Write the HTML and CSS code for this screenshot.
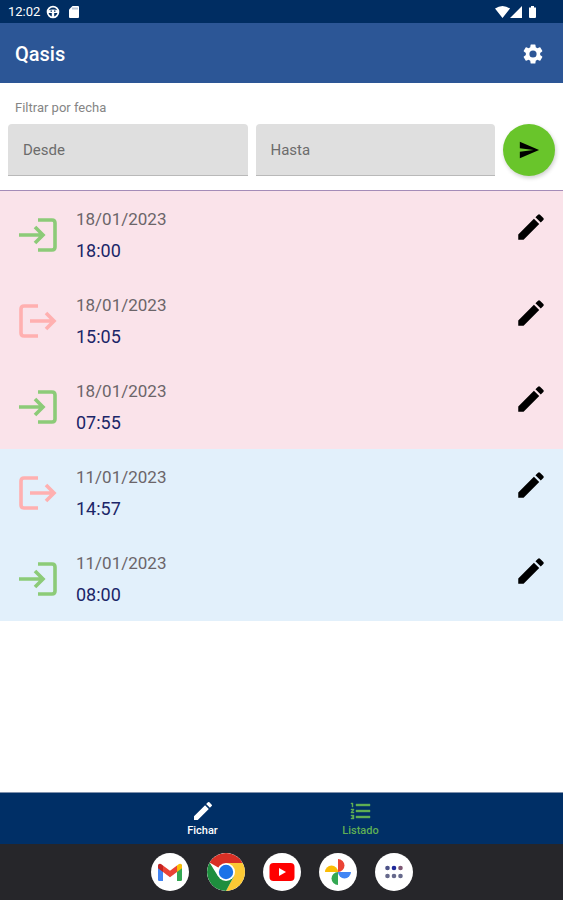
FILE: index.html
```html
<!DOCTYPE html>
<html lang="es">
<head>
<meta charset="utf-8">
<meta name="viewport" content="width=device-width, initial-scale=1">
<title>Qasis</title>
<link rel="stylesheet" href="styles.css">
</head>
<body>
<svg class="symbols" aria-hidden="true">
  <symbol id="enter" viewBox="0 0 40 36">
    <path d="M20 3H34Q37 3 37 6V30Q37 33 34 33H20M1 18H25M17 10L25 18L17 26" fill="none" stroke="currentColor" stroke-width="3.600"/>
  </symbol>
  <symbol id="leave" viewBox="0 0 40 36">
    <path d="M20 3H6Q3 3 3 6V30Q3 33 6 33H20M12 18H36M28 10L36 18L28 26" fill="none" stroke="currentColor" stroke-width="3.600"/>
  </symbol>
  <symbol id="pencil" viewBox="0 0 24 24">
    <path d="M3 17.250V21h3.750L17.810 9.940l-3.750-3.750L3 17.250zM20.710 7.040a1 1 0 0 0 0-1.410l-2.340-2.340a1 1 0 0 0-1.410 0l-1.830 1.830 3.750 3.750 1.830-1.830z" fill="currentColor"/>
  </symbol>
</svg>

<div class="status">
  <time>12:02</time>
  <svg class="status-face" viewBox="0 0 14 14"><circle cx="7" cy="7" r="5.400" fill="none" stroke="#fff" stroke-width="1.800"/><path d="M2 5.500Q7 3.500 12 5.500V8H2zM5.800 8h2.400v4.500H5.800z" fill="#fff"/><path d="M4.500 6.200h1.500M8 6.200h1.500" stroke="#002d62" stroke-width="1.200"/></svg>
  <svg class="status-card" viewBox="0 0 12 14"><path d="M4.500 1H10a1 1 0 0 1 1 1v10a1 1 0 0 1-1 1H2a1 1 0 0 1-1-1V4.500z" fill="#fff"/><path d="M5 2.500v2M7 2.500v2M9 2.500v2" stroke="#5b759b" stroke-width=".8"/></svg>
  <svg class="status-signal" viewBox="0 0 44 14"><path d="M0 3.500Q7.500-1.500 15 3.500L7.500 13zM27 1v12H15zM34 2.500h2V1h3v1.500h2V12a1 1 0 0 1-1 1h-5a1 1 0 0 1-1-1z" fill="#fff"/></svg>
</div>

<header class="appbar">
  <h1>Qasis</h1>
  <button class="settings" type="button" aria-label="Ajustes">
    <svg viewBox="0 0 24 24"><path fill="currentColor" d="M19.140 12.940c.04-.3.060-.61.060-.94s-.020-.64-.070-.94l2.030-1.580a.49.49 0 0 0 .12-.61l-1.920-3.320a.49.49 0 0 0-.59-.22l-2.390.96a7 7 0 0 0-1.620-.94l-.36-2.540A.48.48 0 0 0 13.920 2.400h-3.840a.48.48 0 0 0-.47.410l-.36 2.540a7.300 7.300 0 0 0-1.620.94l-2.390-.96a.48.48 0 0 0-.59.220L2.740 8.870a.48.48 0 0 0 .12.610l2.030 1.580c-.05.3-.09.630-.09.940s.020.640.070.940l-2.030 1.580a.49.49 0 0 0-.12.610l1.920 3.320c.12.220.370.290.590.220l2.390-.96c.5.380 1.030.700 1.620.940l.36 2.540c.05.240.240.410.480.410h3.840c.24 0 .44-.17.470-.41l.36-2.540a7 7 0 0 0 1.620-.94l2.390.96c.22.080.470 0 .590-.22l1.920-3.320a.48.48 0 0 0-.12-.61zM12 15.600a3.600 3.600 0 1 1 0-7.200 3.600 3.600 0 0 1 0 7.200z"/></svg>
  </button>
</header>

<form class="filter">
  <p>Filtrar por fecha</p>
  <div class="fields">
    <input type="text" name="desde" placeholder="Desde" aria-label="Desde">
    <input type="text" name="hasta" placeholder="Hasta" aria-label="Hasta">
    <button class="send" type="button" aria-label="Filtrar"><svg viewBox="0 0 24 24"><path d="M2 21L23 12 2 3v7l15 2-15 2z"/></svg></button>
  </div>
</form>

<main>
  <ul class="records">
    <li class="pink"><svg class="move in"><use href="#enter"/></svg><div class="when"><span class="date">18/01/2023</span><span class="hour">18:00</span></div><button type="button" aria-label="Editar"><svg><use href="#pencil"/></svg></button></li>
    <li class="pink"><svg class="move out"><use href="#leave"/></svg><div class="when"><span class="date">18/01/2023</span><span class="hour">15:05</span></div><button type="button" aria-label="Editar"><svg><use href="#pencil"/></svg></button></li>
    <li class="pink"><svg class="move in"><use href="#enter"/></svg><div class="when"><span class="date">18/01/2023</span><span class="hour">07:55</span></div><button type="button" aria-label="Editar"><svg><use href="#pencil"/></svg></button></li>
    <li class="blue"><svg class="move out"><use href="#leave"/></svg><div class="when"><span class="date">11/01/2023</span><span class="hour">14:57</span></div><button type="button" aria-label="Editar"><svg><use href="#pencil"/></svg></button></li>
    <li class="blue"><svg class="move in"><use href="#enter"/></svg><div class="when"><span class="date">11/01/2023</span><span class="hour">08:00</span></div><button type="button" aria-label="Editar"><svg><use href="#pencil"/></svg></button></li>
  </ul>
</main>

<nav class="tabs">
  <a href="#fichar"><svg><use href="#pencil"/></svg>Fichar</a>
  <a class="active" href="#listado" aria-current="page"><svg viewBox="0 0 24 24"><path fill="currentColor" d="M2 17h2v.5H3v1h1v.5H2v1h3v-4H2zm1-9h1V4H2v1h1zm-1 3h1.800L2 13.100v.9h3v-1H3.200L5 10.900V10H2zm5-6v2h14V5zm0 14h14v-2H7zm0-6h14v-2H7z" stroke="currentColor" stroke-width=".4"/></svg>Listado</a>
</nav>

<footer class="dock">
  <a href="#gmail" aria-label="Gmail"><svg viewBox="0 0 38 38"><path d="M7 11.500v15.200q0 1.300 1.300 1.300H12V15z" fill="#4285f4"/><path d="M26 15v13h3.700q1.300 0 1.300-1.300V11.500z" fill="#34a853"/><path d="M26 12.500V19l5-3.800V13q0-3-3-2z" fill="#fbbc04"/><path d="M12 12.500V19l-5-3.800V13q0-3 3-2z" fill="#c5221f"/><path d="M12 19v-6.500l7 5.200 7-5.200V19l-7 5.200z" fill="#ea4335"/></svg></a>
  <a href="#chrome" aria-label="Chrome"><svg viewBox="0 0 38 38"><path d="M19 19L2.550 9.500A19 19 0 0 1 35.450 9.500z" fill="#d93025"/><path d="M19 10H35.800A19 19 0 0 1 19 38L26.800 23.500z" fill="#fcc934"/><path d="M11.200 23.500L2.550 9.500A19 19 0 0 0 19 38L26.800 23.500z" fill="#1e8e3e"/><circle cx="19" cy="19" r="9" fill="#fff"/><circle cx="19" cy="19" r="7.200" fill="#1a73e8"/></svg></a>
  <a href="#youtube" aria-label="YouTube"><svg viewBox="0 0 38 38"><rect x="6.500" y="10" width="25" height="18" rx="4" fill="#f00"/><path d="M16 15v8l7-4z" fill="#fff"/></svg></a>
  <a href="#fotos" aria-label="Fotos"><svg viewBox="0 0 38 38"><path d="M19 6a6.500 6.500 0 0 1 0 13z" fill="#ea4335"/><path d="M6 19a6.500 6.500 0 0 1 13 0z" fill="#fbbc04"/><path d="M19 32a6.500 6.500 0 0 1 0-13z" fill="#34a853"/><path d="M32 19a6.500 6.500 0 0 1-13 0z" fill="#4285f4"/></svg></a>
  <a href="#apps" aria-label="Aplicaciones"><svg viewBox="0 0 38 38"><g fill="#66698c"><circle cx="12.500" cy="15" r="2.300" fill="#4d5288"/><circle cx="19" cy="15" r="2.300" fill="#20299a"/><circle cx="25.500" cy="15" r="2.300" fill="#7e5874"/><circle cx="12.500" cy="23" r="2.300"/><circle cx="19" cy="23" r="2.300"/><circle cx="25.500" cy="23" r="2.300"/></g></svg></a>
</footer>
</body>
</html>
```
FILE: styles.css
```css
* { box-sizing: border-box; }

body {
  margin: 0;
  min-height: 100vh;
  display: flex;
  flex-direction: column;
  background: #fff;
  font-family: Roboto, "Liberation Sans", sans-serif;
}

button {
  padding: 0;
  border: 0;
  background: none;
  color: inherit;
}

svg { display: block; }

.symbols {
  position: absolute;
  width: 0;
  height: 0;
}

.status {
  display: flex;
  align-items: center;
  height: 23px;
  padding: 0 24px 0 8px;
  background: #002d62;
  color: #fff;
  font-size: 13px;
}

.status-face {
  width: 14px;
  height: 14px;
  margin-left: 6px;
}

.status-card {
  width: 12px;
  height: 14px;
  margin-left: 8px;
}

.status-signal {
  width: 44px;
  height: 14px;
  margin-left: auto;
}

.appbar {
  display: flex;
  align-items: center;
  justify-content: space-between;
  height: 60px;
  padding: 2px 18px 0 15px;
  background: #2c5696;
  color: #fff;
}

.appbar h1 {
  margin: 0;
  font-size: 20px;
  font-weight: 500;
  line-height: 24px;
}

.settings svg {
  width: 24px;
  height: 24px;
}

.filter {
  padding: 17px 8px 14px;
  border-bottom: 1px solid #a48cb8;
}

.filter p {
  margin: 0 7px 8px;
  color: #858585;
  font-size: 13px;
  line-height: 16px;
}

.fields {
  display: flex;
  gap: 8px;
}

.fields input {
  flex: 1;
  min-width: 0;
  height: 52px;
  padding: 0 15px;
  border: 0;
  border-bottom: 1px solid #b9b9b9;
  border-radius: 4px 4px 0 0;
  background: #dfdfdf;
  color: #333;
  font: 15px/20px Roboto, "Liberation Sans", sans-serif;
}

.fields input::placeholder {
  color: #6c6c6c;
  opacity: 1;
}

.send {
  display: grid;
  place-items: center;
  width: 52px;
  height: 52px;
  border-radius: 50%;
  background: #69c52b;
  box-shadow: 1px 2px 4px #0003;
}

.send svg {
  width: 22px;
  height: 22px;
}

main { flex: 1; }

.records {
  margin: 0;
  padding: 0;
  list-style: none;
}

.records li {
  display: flex;
  height: 86px;
  padding: 18px 15px 0 18px;
}

.pink { background: #fae3ea; }
.blue { background: #e2f0fb; }

.move {
  width: 40px;
  height: 36px;
  margin-top: 8px;
}

.in { color: #8ccb78; }
.out { color: #ffb0b0; }

.when {
  display: flex;
  flex: 1;
  flex-direction: column;
  gap: 10px;
  margin-left: 18px;
}

.date {
  color: #6b6569;
  font-size: 17px;
  line-height: 20px;
}

.hour {
  color: #1b2668;
  font-size: 18px;
  line-height: 24px;
}

.records button {
  align-self: flex-start;
  margin-top: 1px;
  color: #000;
}

.records button svg {
  width: 34px;
  height: 34px;
}

.tabs {
  display: flex;
  justify-content: center;
  height: 52px;
  border-top: 1px solid #7f91ad;
  background: #002f66;
}

.tabs a {
  display: flex;
  flex-direction: column;
  align-items: center;
  width: 158px;
  padding-top: 6px;
  color: #fff;
  font-size: 11px;
  font-weight: 500;
  line-height: 16px;
  text-decoration: none;
}

.tabs .active { color: #5fae54; }

.tabs svg {
  width: 24px;
  height: 24px;
}

.dock {
  display: flex;
  align-items: center;
  justify-content: center;
  gap: 18px;
  height: 56px;
  background: #26262a;
}

.dock a {
  width: 38px;
  height: 38px;
  overflow: hidden;
  border-radius: 50%;
  background: #fff;
}
```
